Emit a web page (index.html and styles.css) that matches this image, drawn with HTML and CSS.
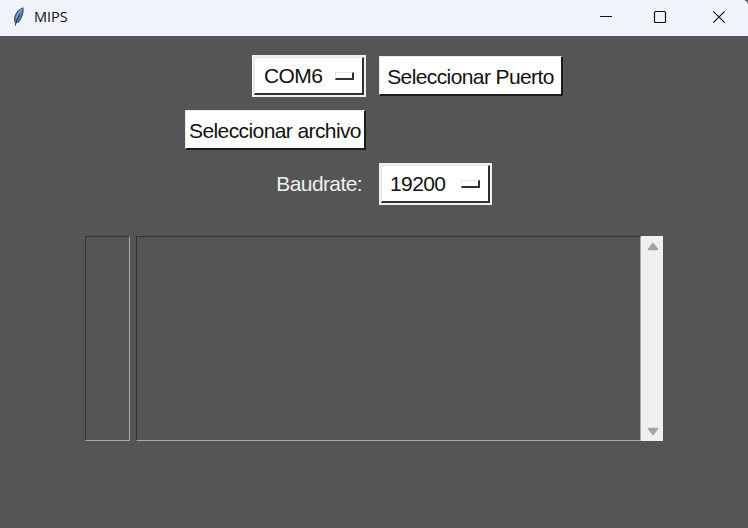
FILE: index.html
```html
<!DOCTYPE html>
<html lang="es">
<head>
<meta charset="utf-8">
<title>MIPS</title>
<link rel="stylesheet" href="styles.css">
</head>
<body>
<div class="window">
  <header class="titlebar">
    <svg class="feather" width="14" height="22" viewBox="0 0 14 22">
      <path d="M11 2C7 3 3 8 2.500 12.500L3.200 16.500L6.500 16C9.500 12 11.500 7 11 2Z" fill="#4a86cc" stroke="#50565c" stroke-width="1.200"/>
      <path d="M9.500 3.500C7 6 5 9 4.500 13" fill="none" stroke="#7fb0e6" stroke-width="1.300"/>
      <path d="M7.500 8.500C6 11 4.500 14 3.300 19.500" fill="none" stroke="#26303b" stroke-width="1.100"/>
    </svg>
    <span class="title">MIPS</span>
    <div class="controls">
      <svg width="58" height="36" viewBox="0 0 58 36"><path d="M26 16.500H38" stroke="#111" fill="none"/></svg>
      <svg width="58" height="36" viewBox="0 0 58 36"><rect x="22.500" y="11.500" width="11" height="11" rx="1" stroke="#111" stroke-width="1.200" fill="none"/></svg>
      <svg width="58" height="36" viewBox="0 0 58 36"><path d="M23.300 11.300L34.700 22.700M34.700 11.300L23.300 22.700" stroke="#111" stroke-width="1.200" fill="none"/></svg>
    </div>
  </header>
  <main class="content">
    <div class="form">
      <div class="option option-port"><div class="option-face"><span>COM6</span><i class="indicator"></i></div></div>
      <button class="button button-port">Seleccionar Puerto</button>
      <button class="button button-file">Seleccionar archivo</button>
      <span></span>
      <label class="label">Baudrate:</label>
      <div class="option option-baud"><div class="option-face"><span>19200</span><i class="indicator"></i></div></div>
    </div>
    <div class="editor">
      <div class="pane lines"></div>
      <div class="pane code"></div>
      <div class="scrollbar">
        <svg width="12" height="9" viewBox="0 0 12 9"><path d="M6 1.500L10.500 7.500H1.500Z" fill="#a3a3a3" stroke="#a3a3a3" stroke-width="1.500" stroke-linejoin="round"/></svg>
        <svg width="12" height="9" viewBox="0 0 12 9"><path d="M6 7.500L10.500 1.500H1.500Z" fill="#a3a3a3" stroke="#a3a3a3" stroke-width="1.500" stroke-linejoin="round"/></svg>
      </div>
    </div>
  </main>
</div>
</body>
</html>
```
FILE: styles.css
```css
* { box-sizing: border-box; }
body { margin: 0; background: #555; }
.window {
  width: 748px;
  height: 528px;
  overflow: hidden;
  background: #555;
  font-family: "Liberation Sans", Arial, sans-serif;
  font-size: 21px;
  letter-spacing: -0.6px;
  color: #111;
}
.titlebar {
  display: flex;
  align-items: center;
  height: 36px;
  padding-left: 12px;
  background: #f0f3f9;
  border-radius: 0 5px 0 0;
}
.feather { margin-top: -3px; }
.title {
  margin-left: 8px;
  margin-top: -4px;
  font-family: "Open Sans", sans-serif;
  font-size: 14.5px;
  letter-spacing: 0;
}
.controls { display: flex; margin-left: auto; }
.controls svg { display: block; }
.content { padding: 19px 85px 0; }
.form {
  display: grid;
  grid-template-columns: 281px 284px;
  grid-template-rows: 42px 42px 42px;
  row-gap: 12px;
  column-gap: 13px;
  align-items: center;
}
.option {
  height: 42px;
  padding: 2px;
  background: #f0f0f0;
}
.option-port { width: 114px; justify-self: end; }
.option-baud { width: 113px; }
.option-face {
  display: flex;
  align-items: center;
  justify-content: space-between;
  height: 38px;
  padding: 1px 8px 0 9px;
  background: #fff;
  border: 1px solid #e3e3e3;
  border-right: 2px solid #303030;
  border-bottom: 2px solid #303030;
}
.option-baud .option-face { padding-left: 8px; }
.indicator {
  width: 19px;
  height: 8px;
  border: 1px solid #e3e3e3;
  border-right: 2px solid #303030;
  border-bottom: 2px solid #303030;
}
.button {
  height: 40px;
  padding: 2px 0 0;
  border: 1px solid #e8e8e8;
  border-right: 2px solid #1c1c1c;
  border-bottom: 2px solid #1c1c1c;
  border-radius: 0;
  background: #fff;
  color: #111;
  font: inherit;
  letter-spacing: inherit;
  white-space: nowrap;
}
.button-port { width: 184px; }
.button-file { width: 181px; justify-self: end; }
.label { justify-self: end; padding-right: 4px; color: #f0f0f0; }
.editor { display: flex; height: 205px; margin-top: 31px; }
.pane {
  border: 1px solid #333;
  border-right-color: #aaa;
  border-bottom-color: #aaa;
}
.lines { width: 45px; margin-right: 6px; }
.code { width: 505px; }
.scrollbar {
  display: flex;
  flex-direction: column;
  align-items: center;
  justify-content: space-between;
  width: 22px;
  padding: 6px 0 5px 1px;
  background: #f0f0f0;
}
```
